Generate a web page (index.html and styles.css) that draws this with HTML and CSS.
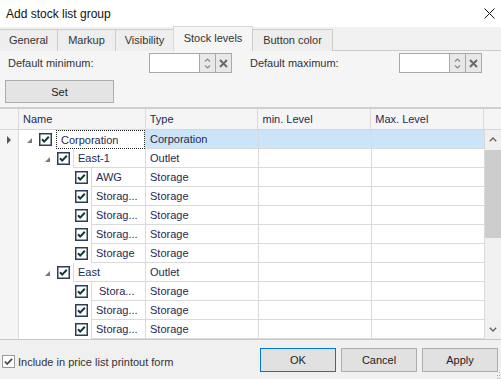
FILE: index.html
```html
<!DOCTYPE html>
<html>
<head>
<meta charset="utf-8">
<link rel="stylesheet" href="styles.css">
</head>
<body>
<div class="win">
  <div class="titlebar">
    <span class="title">Add stock list group</span>
    <svg class="close" width="11" height="11" viewBox="0 0 11 11"><path d="M0.5 0.5L10.5 10.5M10.5 0.5L0.5 10.5" stroke="#111" stroke-width="1" fill="none"/></svg>
  </div>
  <div class="tabs">
    <div class="tab w-gen">General</div>
    <div class="tab w-mark">Markup</div>
    <div class="tab w-vis">Visibility</div>
    <div class="tab tab-active w-stock">Stock levels</div>
    <div class="tab w-btn">Button color</div>
  </div>
  <div class="panel">
    <div class="fields">
      <span class="lbl lbl-min">Default minimum:</span>
      <div class="spin">
        <div class="spin-input"></div>
        <div class="spin-arrows">
          <svg width="7" height="13" viewBox="0 0 7 13"><path d="M1 4.5L3.5 2L6 4.5M1 8.5L3.5 11L6 8.5" stroke="#8a8a8a" stroke-width="1.2" fill="none"/></svg>
        </div>
        <div class="spin-clear">
          <svg width="9" height="9" viewBox="0 0 9 9"><path d="M1 1L8 8M8 1L1 8" stroke="#6a6a6a" stroke-width="2" fill="none"/></svg>
        </div>
      </div>
      <span class="lbl lbl-max">Default maximum:</span>
      <div class="spin">
        <div class="spin-input"></div>
        <div class="spin-arrows">
          <svg width="7" height="13" viewBox="0 0 7 13"><path d="M1 4.5L3.5 2L6 4.5M1 8.5L3.5 11L6 8.5" stroke="#8a8a8a" stroke-width="1.2" fill="none"/></svg>
        </div>
        <div class="spin-clear">
          <svg width="9" height="9" viewBox="0 0 9 9"><path d="M1 1L8 8M8 1L1 8" stroke="#6a6a6a" stroke-width="2" fill="none"/></svg>
        </div>
      </div>
    </div>
    <div class="btn btn-set">Set</div>
  </div>

  <div class="grid">
    <div class="ghead">
      <div class="hc hc-ind"></div>
      <div class="hc hc-name">Name</div>
      <div class="hc hc-col">Type</div>
      <div class="hc hc-col">min. Level</div>
      <div class="hc hc-col">Max. Level</div>
      <div class="hc hc-corner"></div>
    </div>
    <div class="gbody">
      <div class="rows">
        <div class="row sel focus">
          <div class="ind"><svg width="4" height="8" viewBox="0 0 4 8"><path d="M0 0L4 4L0 8Z" fill="#555"/></svg></div>
          <div class="name">
            <span class="exp"><svg width="5" height="5" viewBox="0 0 5 5"><path d="M5 0L5 5L0 5Z" fill="#7a7a7a"/></svg></span>
            <span class="chk"><svg width="13" height="13" viewBox="0 0 13 13"><rect x="0.75" y="0.75" width="11.5" height="11.5" fill="#fff" stroke="#2e3c58" stroke-width="1.5"/><path d="M3 6.3L5.2 8.6L9.8 3.8" stroke="#0f3a30" stroke-width="2" fill="none"/></svg></span>
            <span class="txt">Corporation</span>
          </div>
          <div class="c">Corporation</div><div class="c"></div><div class="c"></div>
        </div>
        <div class="row">
          <div class="ind"></div>
          <div class="name">
            <span class="indent l1"></span>
            <span class="exp"><svg width="5" height="5" viewBox="0 0 5 5"><path d="M5 0L5 5L0 5Z" fill="#7a7a7a"/></svg></span>
            <span class="chk"><svg width="13" height="13" viewBox="0 0 13 13"><rect x="0.75" y="0.75" width="11.5" height="11.5" fill="#fff" stroke="#2e3c58" stroke-width="1.5"/><path d="M3 6.3L5.2 8.6L9.8 3.8" stroke="#0f3a30" stroke-width="2" fill="none"/></svg></span>
            <span class="txt">East-1</span>
          </div>
          <div class="c">Outlet</div><div class="c"></div><div class="c"></div>
        </div>
        <div class="row">
          <div class="ind"></div>
          <div class="name">
            <span class="indent l2"></span><span class="exp"></span>
            <span class="chk"><svg width="13" height="13" viewBox="0 0 13 13"><rect x="0.75" y="0.75" width="11.5" height="11.5" fill="#fff" stroke="#2e3c58" stroke-width="1.5"/><path d="M3 6.3L5.2 8.6L9.8 3.8" stroke="#0f3a30" stroke-width="2" fill="none"/></svg></span>
            <span class="txt">AWG</span>
          </div>
          <div class="c">Storage</div><div class="c"></div><div class="c"></div>
        </div>
        <div class="row">
          <div class="ind"></div>
          <div class="name">
            <span class="indent l2"></span><span class="exp"></span>
            <span class="chk"><svg width="13" height="13" viewBox="0 0 13 13"><rect x="0.75" y="0.75" width="11.5" height="11.5" fill="#fff" stroke="#2e3c58" stroke-width="1.5"/><path d="M3 6.3L5.2 8.6L9.8 3.8" stroke="#0f3a30" stroke-width="2" fill="none"/></svg></span>
            <span class="txt">Storag...</span>
          </div>
          <div class="c">Storage</div><div class="c"></div><div class="c"></div>
        </div>
        <div class="row">
          <div class="ind"></div>
          <div class="name">
            <span class="indent l2"></span><span class="exp"></span>
            <span class="chk"><svg width="13" height="13" viewBox="0 0 13 13"><rect x="0.75" y="0.75" width="11.5" height="11.5" fill="#fff" stroke="#2e3c58" stroke-width="1.5"/><path d="M3 6.3L5.2 8.6L9.8 3.8" stroke="#0f3a30" stroke-width="2" fill="none"/></svg></span>
            <span class="txt">Storag...</span>
          </div>
          <div class="c">Storage</div><div class="c"></div><div class="c"></div>
        </div>
        <div class="row">
          <div class="ind"></div>
          <div class="name">
            <span class="indent l2"></span><span class="exp"></span>
            <span class="chk"><svg width="13" height="13" viewBox="0 0 13 13"><rect x="0.75" y="0.75" width="11.5" height="11.5" fill="#fff" stroke="#2e3c58" stroke-width="1.5"/><path d="M3 6.3L5.2 8.6L9.8 3.8" stroke="#0f3a30" stroke-width="2" fill="none"/></svg></span>
            <span class="txt">Storag...</span>
          </div>
          <div class="c">Storage</div><div class="c"></div><div class="c"></div>
        </div>
        <div class="row">
          <div class="ind"></div>
          <div class="name">
            <span class="indent l2"></span><span class="exp"></span>
            <span class="chk"><svg width="13" height="13" viewBox="0 0 13 13"><rect x="0.75" y="0.75" width="11.5" height="11.5" fill="#fff" stroke="#2e3c58" stroke-width="1.5"/><path d="M3 6.3L5.2 8.6L9.8 3.8" stroke="#0f3a30" stroke-width="2" fill="none"/></svg></span>
            <span class="txt">Storage</span>
          </div>
          <div class="c">Storage</div><div class="c"></div><div class="c"></div>
        </div>
        <div class="row">
          <div class="ind"></div>
          <div class="name">
            <span class="indent l1"></span>
            <span class="exp"><svg width="5" height="5" viewBox="0 0 5 5"><path d="M5 0L5 5L0 5Z" fill="#7a7a7a"/></svg></span>
            <span class="chk"><svg width="13" height="13" viewBox="0 0 13 13"><rect x="0.75" y="0.75" width="11.5" height="11.5" fill="#fff" stroke="#2e3c58" stroke-width="1.5"/><path d="M3 6.3L5.2 8.6L9.8 3.8" stroke="#0f3a30" stroke-width="2" fill="none"/></svg></span>
            <span class="txt">East</span>
          </div>
          <div class="c">Outlet</div><div class="c"></div><div class="c"></div>
        </div>
        <div class="row">
          <div class="ind"></div>
          <div class="name">
            <span class="indent l2"></span><span class="exp"></span>
            <span class="chk"><svg width="13" height="13" viewBox="0 0 13 13"><rect x="0.75" y="0.75" width="11.5" height="11.5" fill="#fff" stroke="#2e3c58" stroke-width="1.5"/><path d="M3 6.3L5.2 8.6L9.8 3.8" stroke="#0f3a30" stroke-width="2" fill="none"/></svg></span>
            <span class="txt txt-sp">Stora...</span>
          </div>
          <div class="c">Storage</div><div class="c"></div><div class="c"></div>
        </div>
        <div class="row">
          <div class="ind"></div>
          <div class="name">
            <span class="indent l2"></span><span class="exp"></span>
            <span class="chk"><svg width="13" height="13" viewBox="0 0 13 13"><rect x="0.75" y="0.75" width="11.5" height="11.5" fill="#fff" stroke="#2e3c58" stroke-width="1.5"/><path d="M3 6.3L5.2 8.6L9.8 3.8" stroke="#0f3a30" stroke-width="2" fill="none"/></svg></span>
            <span class="txt">Storag...</span>
          </div>
          <div class="c">Storage</div><div class="c"></div><div class="c"></div>
        </div>
        <div class="row">
          <div class="ind"></div>
          <div class="name">
            <span class="indent l2"></span><span class="exp"></span>
            <span class="chk"><svg width="13" height="13" viewBox="0 0 13 13"><rect x="0.75" y="0.75" width="11.5" height="11.5" fill="#fff" stroke="#2e3c58" stroke-width="1.5"/><path d="M3 6.3L5.2 8.6L9.8 3.8" stroke="#0f3a30" stroke-width="2" fill="none"/></svg></span>
            <span class="txt">Storag...</span>
          </div>
          <div class="c">Storage</div><div class="c"></div><div class="c"></div>
        </div>
      </div>
      <div class="vscroll">
        <div class="sb-arrow"><svg width="8" height="5" viewBox="0 0 8 5"><path d="M0.8 4.2L4 1L7.2 4.2" stroke="#606060" stroke-width="1.3" fill="none"/></svg></div>
        <div class="sb-thumb"></div>
        <div class="sb-track"></div>
        <div class="sb-arrow"><svg width="8" height="5" viewBox="0 0 8 5"><path d="M0.8 0.8L4 4L7.2 0.8" stroke="#606060" stroke-width="1.3" fill="none"/></svg></div>
      </div>
    </div>
  </div>

  <div class="footer">
    <div class="incl">
      <svg class="incl-box" width="13" height="13" viewBox="0 0 13 13"><rect x="0.5" y="0.5" width="12" height="12" fill="#fff" stroke="#999"/><path d="M2.8 6.5L5.2 9L10 3.8" stroke="#4a4a4a" stroke-width="1.8" fill="none"/></svg>
      <span class="incl-lbl">Include in price list printout form</span>
    </div>
    <div class="actions">
      <div class="btn btn-dlg btn-ok">OK</div>
      <div class="btn btn-dlg">Cancel</div>
      <div class="btn btn-dlg">Apply</div>
    </div>
    <svg class="grip" width="4" height="7" viewBox="0 0 4 7"><rect x="2" y="0" width="1" height="1" fill="#aaa"/><rect x="2" y="3" width="1" height="1" fill="#aaa"/><rect x="0" y="3" width="1" height="1" fill="#aaa"/><rect x="2" y="6" width="1" height="1" fill="#aaa"/><rect x="0" y="6" width="1" height="1" fill="#aaa"/></svg>
  </div>
</div>
</body>
</html>
```
FILE: styles.css
```css
* { box-sizing: border-box; }
html, body { margin: 0; padding: 0; }
body {
  width: 501px;
  height: 379px;
  overflow: hidden;
  background: #f0f0f0;
  font-family: "Liberation Sans", Arial, sans-serif;
  font-size: 11px;
  color: #333;
}
.win { width: 501px; height: 379px; display: flex; flex-direction: column; position: relative; }

.titlebar {
  height: 27px;
  background: #fff;
  display: flex;
  align-items: center;
  justify-content: space-between;
  padding: 0 6px 0 6px;
}
.title { font-size: 12px; color: #111; }
.close { margin-top: -1px; }

.tabs {
  height: 24px;
  display: flex;
  align-items: flex-end;
  background: #f0f0f0;
  border-bottom: 1px solid #cccccc;
}
.tab {
  height: 22px;
  margin-bottom: -1px;
  border: 1px solid #cccccc;
  border-bottom: none;
  background: #eeeeee;
  display: flex;
  align-items: center;
  justify-content: center;
  color: #333;
  margin-left: -1px;
  padding-bottom: 1px;
}
.w-gen { width: 59px; margin-left: -1px; }
.w-mark { width: 59px; }
.w-vis { width: 59px; }
.w-stock { width: 80px; }
.w-btn { width: 81px; }
.tab-active {
  height: 25px;
  background: #f5f5f5;
  border-color: #d8d8d8;
  padding-bottom: 2px;
}

.panel {
  height: 56px;
  background: #f5f5f5;
  padding-top: 2px;
}
.fields { display: flex; align-items: center; height: 20px; }
.lbl { color: #333; }
.lbl-min { width: 141px; margin-left: 8px; }
.lbl-max { width: 149px; margin-left: 18px; }
.spin { display: flex; height: 20px; }
.spin-input { width: 51px; height: 20px; background: #fff; border: 1px solid #a9a9a9; }
.spin-arrows, .spin-clear {
  width: 17px; height: 20px; margin-left: -1px;
  background: #e8e8e8; border: 1px solid #a9a9a9;
  display: flex; align-items: center; justify-content: center;
}
.btn {
  background: #e4e4e4;
  border: 1px solid #adadad;
  display: flex; align-items: center; justify-content: center;
  color: #222;
}
.btn-set { width: 109px; height: 23px; margin: 7px 0 0 5px; }

.grid {
  background: #fff;
  border-top: 2px solid #cfcfcf;
  border-bottom: 1px solid #c8c8c8;
  color: #1f2a52;
}
.ghead { display: flex; height: 21px; background: #f5f5f5; border-bottom: 1px solid #d6d6d6; }
.hc { border-right: 1px solid #dadada; display: flex; align-items: center; padding-left: 4px; padding-bottom: 1px; }
.hc-ind { width: 19px; }
.hc-name { width: 127px; }
.hc-col { width: 113px; }
.hc-corner { width: 17px; border-right: none; }

.gbody { display: flex; height: 209px; }
.rows { width: 485px; }
.row { display: flex; height: 19px; }
.ind {
  width: 19px; background: #f5f5f5; border-right: 1px solid #dadada;
  display: flex; align-items: center; padding-left: 7px;
}
.name { width: 127px; display: flex; border-right: 1px solid #dadada; }
.indent.l1 { width: 18px; flex: none; }
.indent.l2 { width: 36px; flex: none; }
.exp { width: 18px; flex: none; display: flex; align-items: center; padding: 1px 0 0 8px; }
.chk { width: 18px; flex: none; display: flex; align-items: center; padding-left: 2px; }
.txt {
  flex: 1; min-width: 0;
  border-left: 1px solid #dadada;
  border-bottom: 1px solid #dadada;
  display: flex; align-items: center;
  padding-left: 4px;
  white-space: pre;
  overflow: hidden;
}
.txt-sp { padding-left: 7px; }
.c {
  width: 113px; border-right: 1px solid #dadada; border-bottom: 1px solid #dadada;
  display: flex; align-items: center; padding-left: 4px;
}
.sel .c { background: #cce4f7; }
.focus .txt { border: 1px dotted #222; padding-left: 4px; margin-left: 1px; }

.vscroll { width: 16px; background: #f0f0f0; display: flex; flex-direction: column; }
.sb-arrow { height: 19px; display: flex; align-items: center; justify-content: center; }
.sb-thumb { height: 88px; margin-top: 1px; background: #cdcdcd; }
.sb-track { flex: 1; }

.footer {
  flex: 1;
  display: flex;
  justify-content: space-between;
  position: relative;
}
.incl { display: flex; align-items: center; margin-left: 2px; margin-top: 15px; height: 13px; }
.incl-lbl { margin-left: 3px; color: #333; }
.actions { display: flex; gap: 5px; margin-top: 8px; margin-right: 3px; }
.btn-dlg { width: 76px; height: 24px; background: #e1e1e1; }
.btn-ok { border-color: #0078d7; }
.grip { position: absolute; right: 0; bottom: 0; }
```
